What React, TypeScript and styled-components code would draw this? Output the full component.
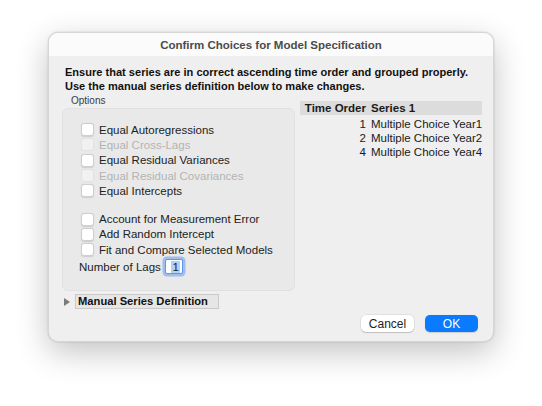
import React from "react";
import styled, { createGlobalStyle } from "styled-components";

const GlobalStyle = createGlobalStyle`
  html, body {
    margin: 0;
    padding: 0;
    background: #ffffff;
  }
  body {
    font-family: "Liberation Sans", Arial, sans-serif;
    color: #1e1e1e;
  }
`;

const Page = styled.div`
  width: 542px;
  height: 406px;
  box-sizing: border-box;
  padding: 32px 0 0 48px;
  background: #ffffff;
`;

const Dialog = styled.div`
  width: 446px;
  height: 310px;
  border-radius: 10px;
  background: #efefef;
  border: 1px solid #d6d6d6;
  box-sizing: border-box;
  overflow: hidden;
  display: flex;
  flex-direction: column;
  box-shadow: 0 10px 32px rgba(0, 0, 0, 0.24), 0 0 2px rgba(0, 0, 0, 0.18);
`;

const TitleBar = styled.div`
  height: 23px;
  background: #fbfbfb;
  display: flex;
  align-items: center;
  justify-content: center;
  font-size: 11.5px;
  font-weight: bold;
  color: #4b4b4b;
  flex-shrink: 0;
`;

const Body = styled.div`
  flex: 1;
  display: flex;
  flex-direction: column;
  padding: 9px 8px 0 13px;
`;

const Intro = styled.div`
  font-size: 11.05px;
  font-weight: bold;
  line-height: 14px;
  color: #111;
  padding-left: 3px;
  white-space: nowrap;
`;

const Columns = styled.div`
  display: flex;
  gap: 5px;
  margin-top: 2px;
`;

const OptionsCol = styled.div`
  width: 233px;
  display: flex;
  flex-direction: column;
`;

const GroupLabel = styled.div`
  font-size: 10px;
  color: #3a3a3a;
  padding-left: 9px;
  height: 12px;
  line-height: 12px;
`;

const GroupBox = styled.div`
  margin-top: 1px;
  height: 183px;
  box-sizing: border-box;
  border: 1px solid #e0e0e0;
  border-radius: 6px;
  background: #e9e9e9;
  padding: 13px 0 0 18px;
  display: flex;
  flex-direction: column;
`;

const CheckRow = styled.label<{ $disabled?: boolean }>`
  display: flex;
  align-items: center;
  gap: 5px;
  height: 15.3px;
  font-size: 11.5px;
  white-space: nowrap;
  color: ${(p) => (p.$disabled ? "#b4b4b4" : "#222")};
`;

const Box = styled.span<{ $disabled?: boolean }>`
  width: 11px;
  height: 11px;
  border-radius: 3px;
  background: ${(p) => (p.$disabled ? "#f1f1f1" : "#ffffff")};
  border: 1px solid ${(p) => (p.$disabled ? "#e2e2e2" : "#cfcfcf")};
  box-shadow: ${(p) => (p.$disabled ? "none" : "0 0.5px 1px rgba(0,0,0,0.12)")};
  flex-shrink: 0;
`;

const Spacer = styled.div`
  height: 13px;
`;

const LagsRow = styled.div`
  display: flex;
  align-items: center;
  gap: 4px;
  margin-left: -2px;
  margin-top: 2px;
  font-size: 11.5px;
  color: #222;
`;

const LagsInput = styled.div`
  width: 18px;
  height: 15px;
  box-sizing: border-box;
  border: 1px solid #5d96ec;
  border-radius: 2px;
  background: #ffffff;
  display: flex;
  justify-content: flex-end;
  align-items: center;
  padding-right: 2px;
  box-shadow: 0 0 0 2.5px rgba(110, 160, 240, 0.6);
`;

const Selected = styled.span`
  background: #b3d0f7;
  padding: 0 1px;
  font-size: 11.5px;
  line-height: 12px;
`;

const TableCol = styled.div`
  flex: 1;
  display: flex;
  flex-direction: column;
  padding-top: 6px;
`;

const TableHead = styled.div`
  display: grid;
  grid-template-columns: 66px 1fr;
  column-gap: 5px;
  background: #dcdcdc;
  height: 14px;
  align-items: center;
  font-size: 11.5px;
  font-weight: bold;
  color: #1a1a1a;
  width: 182px;
  white-space: nowrap;
`;

const TableRow = styled.div`
  display: grid;
  grid-template-columns: 66px 1fr;
  column-gap: 5px;
  height: 14px;
  align-items: center;
  font-size: 11.5px;
  color: #1a1a1a;
  white-space: nowrap;
`;

const Num = styled.span`
  text-align: right;
`;

const FirstRowGap = styled.div`
  height: 2px;
`;

const Disclosure = styled.div`
  display: flex;
  align-items: center;
  gap: 5px;
  margin-top: 3px;
  margin-left: 2px;
`;

const Triangle = styled.span`
  width: 0;
  height: 0;
  border-top: 4px solid transparent;
  border-bottom: 4px solid transparent;
  border-left: 6px solid #7a7a7a;
`;

const DisclosureBox = styled.div`
  width: 144px;
  height: 15px;
  box-sizing: border-box;
  border: 1px solid #c9c9c9;
  background: #e6e6e6;
  font-size: 11.2px;
  font-weight: bold;
  line-height: 13px;
  padding-left: 2px;
  color: #111;
  white-space: nowrap;
`;

const Buttons = styled.div`
  display: flex;
  justify-content: flex-end;
  gap: 11px;
  margin-top: 6px;
  margin-right: 7px;
`;

const Button = styled.div<{ $primary?: boolean }>`
  width: 53px;
  height: 17px;
  border-radius: 5px;
  display: flex;
  align-items: center;
  justify-content: center;
  font-size: 12px;
  color: ${(p) => (p.$primary ? "#ffffff" : "#222")};
  background: ${(p) => (p.$primary ? "#0a7bff" : "#ffffff")};
  box-shadow: ${(p) =>
    p.$primary
      ? "0 0.5px 1px rgba(0,0,0,0.15)"
      : "0 0 0 0.5px rgba(0,0,0,0.12), 0 1px 1px rgba(0,0,0,0.15)"};
`;

const options: { label: string; disabled?: boolean }[] = [
  { label: "Equal Autoregressions" },
  { label: "Equal Cross-Lags", disabled: true },
  { label: "Equal Residual Variances" },
  { label: "Equal Residual Covariances", disabled: true },
  { label: "Equal Intercepts" },
];

const extras = [
  "Account for Measurement Error",
  "Add Random Intercept",
  "Fit and Compare Selected Models",
];

const series = [
  { order: 1, name: "Multiple Choice Year1" },
  { order: 2, name: "Multiple Choice Year2" },
  { order: 4, name: "Multiple Choice Year4" },
];

export default function App() {
  return (
    <Page>
      <GlobalStyle />
      <Dialog>
        <TitleBar>Confirm Choices for Model Specification</TitleBar>
        <Body>
          <Intro>
            Ensure that series are in correct ascending time order and grouped properly.
            <br />
            Use the manual series definition below to make changes.
          </Intro>
          <Columns>
            <OptionsCol>
              <GroupLabel>Options</GroupLabel>
              <GroupBox>
                {options.map((o) => (
                  <CheckRow key={o.label} $disabled={o.disabled}>
                    <Box $disabled={o.disabled} />
                    {o.label}
                  </CheckRow>
                ))}
                <Spacer />
                {extras.map((label) => (
                  <CheckRow key={label}>
                    <Box />
                    {label}
                  </CheckRow>
                ))}
                <LagsRow>
                  Number of Lags
                  <LagsInput>
                    <Selected>1</Selected>
                  </LagsInput>
                </LagsRow>
              </GroupBox>
            </OptionsCol>
            <TableCol>
              <TableHead>
                <Num>Time Order</Num>
                <span>Series 1</span>
              </TableHead>
              <FirstRowGap />
              {series.map((s) => (
                <TableRow key={s.order}>
                  <Num>{s.order}</Num>
                  <span>{s.name}</span>
                </TableRow>
              ))}
            </TableCol>
          </Columns>
          <Disclosure>
            <Triangle />
            <DisclosureBox>Manual Series Definition</DisclosureBox>
          </Disclosure>
          <Buttons>
            <Button>Cancel</Button>
            <Button $primary>OK</Button>
          </Buttons>
        </Body>
      </Dialog>
    </Page>
  );
}
